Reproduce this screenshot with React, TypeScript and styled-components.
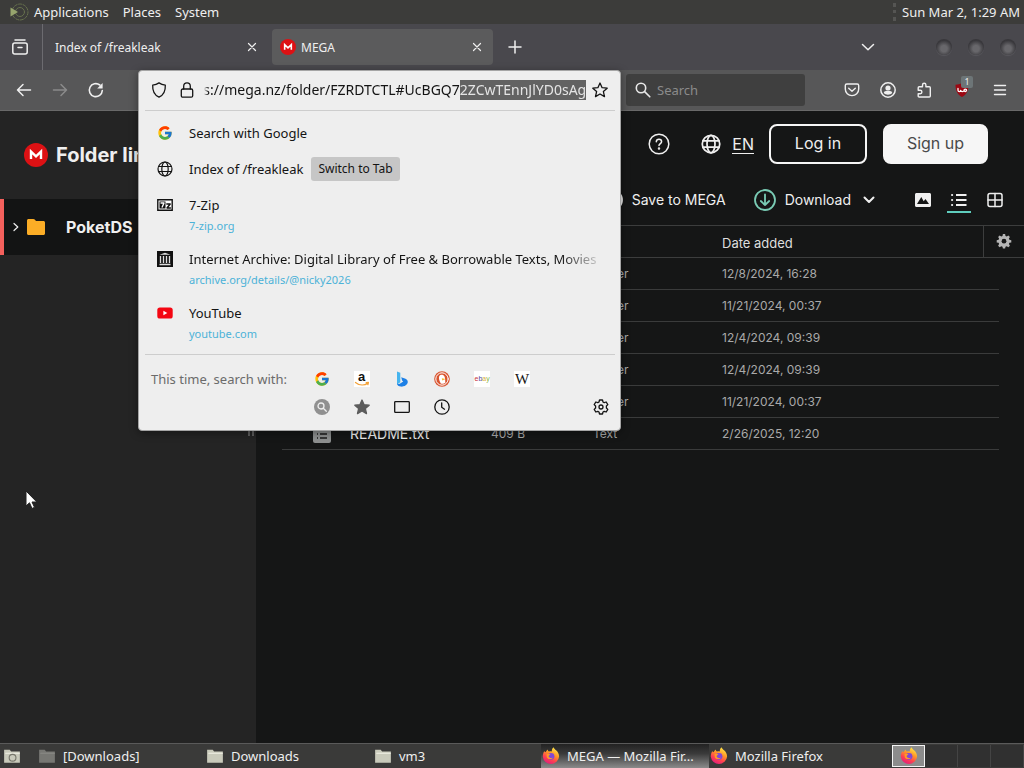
import React, { useEffect, useRef } from "react";
import styled, { createGlobalStyle, css } from "styled-components";
import { FcGoogle } from "react-icons/fc";

const UI_FONT = `"Noto Sans", "Open Sans", sans-serif`;
const WEB_FONT = `Inter, "Liberation Sans", sans-serif`;

const GlobalStyle = createGlobalStyle`
  *, *::before, *::after { box-sizing: border-box; }
  body { margin: 0; background: #151616; font-family: ${UI_FONT}; font-size: 13px; line-height: 20px; color: #efefef; }
  button { font: inherit; color: inherit; border: 0; background: none; padding: 0; cursor: default; }
  a { color: inherit; text-decoration: none; }
  svg { display: block; flex: none; overflow: visible; }
`;

const Desktop = styled.div`
  min-height: 100vh;
  display: flex;
  flex-direction: column;
  overflow: hidden;
`;

/* ---------- desktop panel ---------- */
const TopPanel = styled.header`
  height: 24px;
  display: flex;
  align-items: center;
  padding: 0 4px 0 9px;
  background: #3c3c3a;
`;
const PanelMenu = styled.nav`
  display: flex;
  align-items: center;
  gap: 14px;
`;
const PanelItem = styled.button`
  display: flex;
  align-items: center;
  gap: 5px;
  white-space: nowrap;
`;
const Clock = styled.time`
  margin-left: auto;
  padding-left: 6px;
  border-left: 3px dotted #555553;
  line-height: 18px;
  white-space: nowrap;
`;

/* ---------- browser chrome ---------- */
const TabStrip = styled.div`
  height: 46px;
  display: flex;
  align-items: center;
  background: #49484d;
`;
const TabOverview = styled.button`
  width: 43px;
  align-self: stretch;
  display: flex;
  align-items: center;
  justify-content: center;
  padding-right: 3px;
  border-right: 1px solid #6c6b70;
`;
const Tab = styled.div<{ $active?: boolean }>`
  flex: 0 1 221px;
  height: 36px;
  display: flex;
  align-items: center;
  gap: 5px;
  padding: 0 11px 0 8px;
  border-radius: 4px;
  font-size: 12px;
  background: ${(p) => (p.$active ? "#5b5b5c" : "transparent")};
  & + & { margin-left: 4px; }
  ${(p) => !p.$active && css`flex-basis: 225px; padding: 0 11px 0 12px;`}
`;
const TabTitle = styled.span`
  flex: 1;
  padding-top: 2px;
  white-space: nowrap;
  overflow: hidden;
`;
const NewTab = styled.button`
  margin-left: 15px;
`;
const WindowControls = styled.div`
  display: flex;
  align-items: center;
  gap: 16px;
  margin-left: auto;
  padding-right: 8px;
`;
const TabListButton = styled.button`
  margin-right: 45px;
`;
const WindowButton = styled.button`
  width: 16px;
  height: 16px;
  border-radius: 50%;
  background: radial-gradient(circle at 50% 60%, #68676b 0 25%, #39383c 65%, #353438 100%);
  box-shadow: 0 1px 1px #59585d;
`;
const NavBar = styled.div`
  height: 41px;
  display: flex;
  align-items: center;
  background: #575758;
  border-bottom: 1px solid #696969;
`;
const NavButtons = styled.div`
  display: flex;
  align-items: center;
  gap: 20px;
  width: 138px;
  padding-left: 16px;
`;
const UrlSlot = styled.div`
  flex: 1;
  align-self: stretch;
  position: relative;
  margin-right: 5px;
`;
const SearchBox = styled.label`
  width: 179px;
  height: 32px;
  display: flex;
  align-items: center;
  gap: 6px;
  padding: 0 9px;
  border-radius: 3px;
  background: #3f3f3f;
`;
const SearchInput = styled.input`
  flex: 1;
  min-width: 0;
  padding: 0;
  border: 0;
  outline: 0;
  background: none;
  font: inherit;
  color: #fff;
  &::placeholder { color: #8b8b8b; opacity: 1; }
`;
const Extensions = styled.div`
  width: 219px;
  display: flex;
  align-items: center;
  justify-content: flex-end;
  gap: 20px;
  padding-right: 16px;
`;
const ShieldButton = styled.button`
  position: relative;
  margin: 0 2px;
`;
const Badge = styled.span`
  position: absolute;
  top: -6px;
  left: 7px;
  width: 12px;
  height: 12px;
  border-radius: 2px;
  background: #6d7577;
  font-size: 9px;
  line-height: 12px;
  text-align: center;
`;

/* ---------- address bar drop-down ---------- */
const UrlPanel = styled.section`
  position: absolute;
  z-index: 10;
  top: 0;
  left: 0;
  right: 0;
  padding: 0 5px 9px 6px;
  border: 1px solid #a5a5a5;
  border-radius: 4px;
  background: #eeeeee;
  color: #141414;
  box-shadow: 0 2px 8px rgba(0, 0, 0, 0.4);
`;
const UrlRow = styled.div`
  height: 40px;
  display: flex;
  align-items: center;
  padding: 0 7px 2px 6px;
  border-bottom: 1px solid #cdcdcd;
`;
const UrlInput = styled.input`
  flex: 1;
  min-width: 0;
  height: 20px;
  margin: 0 6px 0 9px;
  padding: 0;
  border: 0;
  outline: 0;
  background: none;
  font: inherit;
  font-size: 14px;
  color: inherit;
  mask-image: linear-gradient(90deg, transparent 0, #000 4px);
  &::selection { background: #626262; color: #e4e4e4; }
`;
const LockSlot = styled.span`
  margin-left: 12px;
`;
const Results = styled.ul`
  list-style: none;
  margin: 0;
  padding: 4px 9px 5px 12px;
  border-bottom: 1px solid #cdcdcd;
`;
const Result = styled.li`
  display: flex;
  align-items: flex-start;
  gap: 16px;
  min-height: 36px;
  padding-top: 8px;
  & > svg { margin-top: 2px; }
`;
const ResultText = styled.div`
  flex: 1;
  min-width: 0;
  min-height: 46px;
`;
const ResultTitle = styled.div<{ $fade?: boolean }>`
  white-space: nowrap;
  ${(p) => p.$fade && css`width: fit-content; mask-image: linear-gradient(270deg, rgba(0, 0, 0, 0.2) 0, #000 36px);`}
`;
const ResultUrl = styled.a`
  display: block;
  padding-top: 1px;
  font-size: 11px;
  line-height: 19px;
  color: #4cb2d8;
`;
const SwitchChip = styled.button`
  height: 24px;
  margin: -2px 0 0 -8px;
  padding: 0 7px;
  border-radius: 3px;
  background: #c6c6c6;
  font-size: 12px;
`;
const SearchWith = styled.div`
  display: flex;
  padding: 10px 6px 0;
  color: #6b6b6b;
`;
const SearchLabel = styled.span`
  width: 151px;
  line-height: 28px;
`;
const Engines = styled.div`
  display: grid;
  grid-template-columns: repeat(6, 40px);
  grid-auto-rows: 28px;
  color: #141414;
`;
const EngineButton = styled.button`
  display: flex;
  align-items: center;
  justify-content: center;
`;
const EngineTile = styled.span`
  width: 16px;
  height: 16px;
  display: flex;
  align-items: center;
  justify-content: center;
  background: #fff;
  font: 15px/16px "Liberation Serif", serif;
`;
const EngineSettings = styled.button`
  align-self: flex-end;
  margin-left: auto;
  height: 28px;
  color: #141414;
`;

/* ---------- web page ---------- */
const Page = styled.div`
  flex: 1;
  display: flex;
  position: relative;
  font-family: ${WEB_FONT};
  background: #151616;
`;
const Sidebar = styled.aside`
  position: relative;
  width: 256px;
  flex: none;
  background: #242424;
`;
const SidebarHeader = styled.div`
  height: 88px;
  display: flex;
  align-items: center;
  gap: 8px;
  padding-left: 24px;
`;
const SidebarTitle = styled.h1`
  margin: 0;
  font-size: 20px;
  line-height: 28px;
  font-weight: 700;
`;
const FolderRow = styled.a`
  height: 56px;
  display: flex;
  align-items: center;
  padding-left: 8px;
  border-left: 4px solid #f4605c;
  background: #131414;
  font-size: 16px;
  font-weight: 700;
`;
const FolderName = styled.span`
  margin-left: 14px;
`;
const ResizeGrip = styled.span`
  position: absolute;
  right: 2px;
  top: 316px;
  width: 6px;
  height: 9px;
  border: solid #5d5d5d;
  border-width: 0 2px;
`;
const MainArea = styled.main`
  flex: 1;
  min-width: 0;
`;
const Account = styled.div`
  display: flex;
  align-items: center;
  justify-content: flex-end;
  padding: 13px 36px 0 0;
  font-size: 16px;
`;
const Language = styled.button`
  display: flex;
  align-items: center;
  gap: 11px;
  margin: 0 15px 0 31px;
`;
const LanguageCode = styled.span`
  border-bottom: 1px solid #efefef;
  line-height: 18px;
`;
const AccountButton = styled.button<{ $solid?: boolean }>`
  width: ${(p) => (p.$solid ? 105 : 98)}px;
  height: 40px;
  padding-bottom: 2px;
  border: 2px solid #f6f6f6;
  border-radius: 8px;
  background: ${(p) => (p.$solid ? "#f6f6f6" : "transparent")};
  color: ${(p) => (p.$solid ? "#4a4a4a" : "#efefef")};
  & + & { margin-left: 16px; }
`;
const Actions = styled.div`
  height: 32px;
  display: flex;
  align-items: center;
  justify-content: flex-end;
  margin: 20px 0 9px;
  padding-right: 17px;
  font-size: 14px;
`;
const Action = styled.button`
  display: flex;
  align-items: center;
  gap: 9px;
  margin-right: 28px;
  white-space: nowrap;
  &:nth-child(2) { margin-right: 33px; }
`;
const ViewButton = styled.button<{ $active?: boolean }>`
  width: 24px;
  height: 26px;
  display: flex;
  align-items: center;
  justify-content: center;
  border: solid transparent;
  border-width: 2px 0;
  border-bottom-color: ${(p) => (p.$active ? "#5fcdbd" : "transparent")};
  & + & { margin-left: 12px; }
`;
const FileTable = styled.table`
  width: 100%;
  border-spacing: 0;
  table-layout: fixed;
  font-size: 12px;
  color: #a9a9a9;
`;
const HeadCell = styled.th<{ $gear?: boolean }>`
  height: 33px;
  padding: 2px 0 0;
  border: solid #3c3d3d;
  border-width: 1px 0;
  font-weight: 400;
  font-size: 13px;
  text-align: left;
  color: #dedede;
  ${(p) => p.$gear && css`border-left-width: 1px; padding: 4px 0 0 12px;`}
`;
const FileRow = styled.tr`
  background: linear-gradient(#3a3b3b, #3a3b3b) no-repeat 26px 31px / calc(100% - 51px) 1px;
`;
const Cell = styled.td`
  height: 32px;
  padding: 0;
`;
const NameCell = styled.div`
  display: flex;
  align-items: center;
  gap: 19px;
  padding-left: 57px;
  font-size: 14px;
  color: #efefef;
`;
const Pointer = styled.svg`
  position: absolute;
  left: 25px;
  top: 379px;
`;

/* ---------- window list ---------- */
const Taskbar = styled.footer`
  height: 25px;
  display: flex;
  align-items: center;
  background: #3a3a39;
  border-top: 1px solid #5a5a5a;
`;
const ShowDesktop = styled.button`
  width: 37px;
  padding-left: 3px;
`;
const WindowItem = styled.button<{ $active?: boolean }>`
  flex: 0 1 168px;
  height: 24px;
  display: flex;
  align-items: center;
  gap: 7px;
  padding-left: 1px;
  white-space: nowrap;
  background: ${(p) => (p.$active ? "linear-gradient(#222, #3a3a3a 40%, #8b8b8b)" : "none")};
`;
const Workspaces = styled.div`
  display: flex;
  margin-left: auto;
`;
const Workspace = styled.button<{ $active?: boolean }>`
  width: 33px;
  height: 22px;
  display: flex;
  align-items: center;
  justify-content: center;
  border-right: 1px solid #444;
  background: #303030;
  ${(p) => p.$active && css`border: 1px solid #f4f4f4; background: #8c8c8c;`}
`;

/* ---------- drawings ---------- */
type IconProps = { size?: number; width?: number; color?: string; box?: number; children: React.ReactNode };
const Icon = ({ size = 16, width = 1.3, color = "currentColor", box = 16, children }: IconProps) => (
  <svg width={size} height={size} viewBox={`0 0 ${box} ${box}`} fill="none" stroke={color} strokeWidth={width} strokeLinecap="round" strokeLinejoin="round" aria-hidden="true">
    {children}
  </svg>
);
const CloseIcon = () => <Icon size={10} box={10} width={1.2}><path d="M1.5 1.5l7 7M8.5 1.5l-7 7" /></Icon>;
const MegaLogo = ({ size }: { size: number }) => (
  <Icon size={size} box={24} width={2.4}>
    <circle cx="12" cy="12" r="12" fill="#dd1114" stroke="none" />
    <path d="M7 16V8.6l5 4.8 5-4.8V16" stroke="#fff" strokeLinecap="butt" strokeLinejoin="miter" />
  </Icon>
);
const GlobeIcon = ({ size = 16, width = 1.2 }) => (
  <Icon size={size} width={width}>
    <circle cx="8" cy="8" r="7" />
    <ellipse cx="8" cy="8" rx="3.2" ry="7" />
    <path d="M1.6 5.5h12.8M1.6 10.5h12.8" />
  </Icon>
);
const FolderGlyph = ({ dim, home }: { dim?: boolean; home?: boolean }) => (
  <Icon size={18} width={1}>
    <path d="M1 2.5h5l1.2 1.5H15v10H1z" fill={dim ? "#777773" : "#c9cabb"} stroke="none" />
    <path d="M2.5 5.5h12" stroke={dim ? "#8b8b87" : "#f1f1e6"} />
    {home && <circle cx="8.5" cy="9.5" r="3" stroke="#77776c" />}
  </Icon>
);
const FirefoxGlyph = () => (
  <Icon size={18} box={18} width={1}>
    <defs>
      <linearGradient id="fox" x1="0.8" y1="0" x2="0.3" y2="1">
        <stop offset="0" stopColor="#fff14f" />
        <stop offset="0.4" stopColor="#ff9a26" />
        <stop offset="0.7" stopColor="#ff4250" />
        <stop offset="1" stopColor="#e21d7c" />
      </linearGradient>
    </defs>
    <path d="M2.2 4.2L3.6 5.3C4.1 4 4.8 3 5.7 2.4c.1 1.1.6 1.7 1.4 2.1 1-.3 2-.2 2.8 0-.2-1.9.4-3.2 1.7-4.2.1 2.3 5.5 3.4 5.5 9.2A8.2 8.2 0 0 1 .8 9.8C.7 7.6 1.4 5.7 2.2 4.2z" fill="url(#fox)" stroke="none" />
    <circle cx="9" cy="9.3" r="3.4" fill="#8148d5" stroke="none" />
    <path d="M4.5 7.3c1.5-.9 2.9-.6 4.1.3-1.2.2-1.8.9-2 1.8.7 1.5 2.6 2 4.3 1-1.1 2.3-5 2.3-6.1-.2z" fill="#ff9a26" stroke="none" />
  </Icon>
);
const GearSolid = () => (
  <Icon size={16}>
    <path d="M6.9 1h2.2l.4 1.9 1.2.5 1.7-1 1.5 1.5-1 1.7.5 1.2 1.9.4v2.2l-1.9.4-.5 1.2 1 1.7-1.5 1.5-1.7-1-1.2.5-.4 1.9H6.9l-.4-1.9-1.2-.5-1.7 1-1.5-1.5 1-1.7-.5-1.2L.7 9.4V7.2l1.9-.4.5-1.2-1-1.7 1.5-1.5 1.7 1 1.2-.5z" fill="#b4b4b4" stroke="none" />
    <circle cx="8" cy="8.2" r="2.4" fill="#151616" stroke="none" />
  </Icon>
);
const SevenZip = () => (
  <Icon width={1.4}>
    <path d="M.8 2.8h14.4v10.4H.8z" fill="#fff" stroke="#111" strokeLinejoin="miter" />
    <path d="M2.5 4.5h6v7h-6z" fill="#111" stroke="none" />
    <path d="M4 6h3L5.2 10" stroke="#fff" />
    <path d="M9.8 7h3.4l-3.2 4h3.4" stroke="#111" />
  </Icon>
);
const ArchiveIcon = () => (
  <Icon>
    <path d="M0 0h16v16H0z" fill="#111" stroke="none" />
    <path d="M2.5 3.8L8 1.8l5.500 2zM2.500 12.800h11v1.400h-11z" fill="#ddd" stroke="none" />
    <path d="M3.5 5v7M6.500 5v7M9.500 5v7M12.500 5v7" stroke="#ddd" strokeLinecap="butt" />
  </Icon>
);
const YouTubeIcon = () => (
  <Icon>
    <rect x="0.3" y="2.5" width="15.4" height="11" rx="2.6" fill="#f40612" stroke="none" />
    <path d="M6.4 5.8v4.4L10.3 8z" fill="#fff" stroke="none" />
  </Icon>
);
const AmazonIcon = () => (
  <Icon>
    <path d="M0 0h16v16H0z" fill="#fff" stroke="none" />
    <text x="4" y="10" fontFamily="Liberation Sans, sans-serif" fontWeight="700" fontSize="13" fill="#111" stroke="none">a</text>
    <path d="M1.5 11.5c4 3.2 9 3.1 12.5.6M12.2 11.6l2.2-.1-.5 2" stroke="#f3a33b" />
  </Icon>
);
const BingIcon = () => (
  <Icon>
    <path d="M3 .5l3.3 1.2v9.6L3 13.5z" fill="#45b4ee" stroke="none" />
    <path d="M7.2 6.3l4.3 1.5c2.3.9 3 3.4 1.6 5.3-1.3 1.8-3.8 2.7-6.1 2.5-2.3-.2-3.9-1.3-4-3.1 1.2.8 2.6.5 3.6-.3l2.600-1.800-1.100-.8z" fill="#1d80e6" stroke="none" />
  </Icon>
);
const DuckIcon = () => (
  <Icon width={1}>
    <circle cx="8" cy="8" r="7.8" fill="#d9542f" stroke="none" />
    <circle cx="8" cy="8" r="6.2" stroke="#fff" />
    <path d="M5.2 5.2c1.2-2 4.3-2 5.3.3.9 2 .6 4.7.9 6.3-1.2 1-3.3 1.3-4.6.6C5.6 10.5 4.4 7.2 5.2 5.2z" fill="#fff" stroke="none" />
    <path d="M7.8 7.3l3.9.6-3.5 1.6z" fill="#f6b72e" stroke="none" />
  </Icon>
);

const URL_START = "https://mega.nz/folder/FZRDTCTL#UcBGQ7";
const URL_SELECTED = "2ZCwTEnnJlYD0sAg";

function AddressInput() {
  const ref = useRef<HTMLInputElement>(null);
  useEffect(() => {
    const el = ref.current;
    if (!el) return;
    el.focus();
    el.setSelectionRange(URL_START.length, URL_START.length + URL_SELECTED.length);
    el.scrollLeft = el.scrollWidth;
  }, []);
  return <UrlInput ref={ref} aria-label="Address" spellCheck={false} defaultValue={URL_START + URL_SELECTED} />;
}

const files = [
  { type: "Folder", date: "12/8/2024, 16:28" },
  { type: "Folder", date: "11/21/2024, 00:37" },
  { type: "Folder", date: "12/4/2024, 09:39" },
  { type: "Folder", date: "12/4/2024, 09:39" },
  { type: "Folder", date: "11/21/2024, 00:37" },
  { name: "README.txt", size: "409 B", type: "Text", date: "2/26/2025, 12:20" },
];

const sites = [
  { icon: <SevenZip />, title: "7-Zip", url: "7-zip.org" },
  { icon: <ArchiveIcon />, title: "Internet Archive: Digital Library of Free & Borrowable Texts, Movies", url: "archive.org/details/@nicky2026", fade: true },
  { icon: <YouTubeIcon />, title: "YouTube", url: "youtube.com" },
];

function AddressPanel() {
  return (
    <UrlPanel>
      <UrlRow>
        <Icon size={16}><path d="M8 .9c2 1.4 4 2 6.3 2.2.3 5.5-1.7 10-6.3 12C3.4 13.1 1.4 8.6 1.7 3.1 4 2.9 6 2.3 8 .9z" /></Icon>
        <LockSlot>
          <Icon size={16}><rect x="2.3" y="7" width="11.4" height="8.2" rx="1.5" /><path d="M4.7 7V4.2a3.3 3.3 0 0 1 6.6 0V7" /></Icon>
        </LockSlot>
        <AddressInput />
        <button aria-label="Bookmark this page">
          <Icon size={16}><path d="M8 1l2.1 4.7 5.1.5-3.8 3.4 1.1 5L8 12l-4.5 2.6 1.1-5L.8 6.2l5.1-.5z" /></Icon>
        </button>
      </UrlRow>
      <Results>
        <Result><FcGoogle size={16} /><ResultTitle>Search with Google</ResultTitle></Result>
        <Result><GlobeIcon /><ResultTitle>Index of /freakleak</ResultTitle><SwitchChip>Switch to Tab</SwitchChip></Result>
        {sites.map((s) => (
          <Result key={s.url}>
            {s.icon}
            <ResultText>
              <ResultTitle $fade={s.fade}>{s.title}</ResultTitle>
              <ResultUrl href="#">{s.url}</ResultUrl>
            </ResultText>
          </Result>
        ))}
      </Results>
      <SearchWith>
        <SearchLabel>This time, search with:</SearchLabel>
        <Engines>
          <EngineButton aria-label="Google"><FcGoogle size={16} /></EngineButton>
          <EngineButton aria-label="Amazon"><AmazonIcon /></EngineButton>
          <EngineButton aria-label="Bing"><BingIcon /></EngineButton>
          <EngineButton aria-label="DuckDuckGo"><DuckIcon /></EngineButton>
          <EngineButton aria-label="eBay">
            <Icon>
              <path d="M0 0h16v16H0z" fill="#fff" stroke="none" />
              <text x="0.5" y="10" fontFamily="Liberation Sans, sans-serif" fontSize="7" stroke="none">
                <tspan fill="#c8323c">e</tspan><tspan fill="#4a4a9a">b</tspan><tspan fill="#dcae3c">a</tspan><tspan fill="#86b843">y</tspan>
              </text>
            </Icon>
          </EngineButton>
          <EngineButton aria-label="Wikipedia"><EngineTile>W</EngineTile></EngineButton>
          <EngineButton aria-label="Search suggestions">
            <Icon><circle cx="8" cy="8" r="8" fill="#909090" stroke="none" /><circle cx="7" cy="7" r="3" stroke="#eee" /><path d="M9.3 9.3l3 3" stroke="#eee" /></Icon>
          </EngineButton>
          <EngineButton aria-label="Bookmarks">
            <Icon><path d="M8 1l2.1 4.7 5.1.5-3.8 3.4 1.1 5L8 12l-4.5 2.6 1.1-5L.8 6.2l5.1-.5z" fill="#5c5c5c" stroke="#5c5c5c" /></Icon>
          </EngineButton>
          <EngineButton aria-label="Tabs"><Icon><rect x="0.7" y="2.6" width="14.6" height="10.8" rx="0.8" /></Icon></EngineButton>
          <EngineButton aria-label="History"><Icon><circle cx="8" cy="8" r="7.2" /><path d="M7.7 3.8v4.4l2.8 2" /></Icon></EngineButton>
        </Engines>
        <EngineSettings aria-label="Search settings">
          <Icon><path d="M6.5 1h3l.5 2 1.2.7 2-.7 1.6 2.6L13.4 7v2l1.4 1.4-1.6 2.6-2-.7-1.2.7-.5 2h-3L6 13l-1.2-.7-2 .7-1.6-2.6L2.6 9V7L1.2 5.6 2.8 3l2 .7L6 3z" /><circle cx="8" cy="8" r="2" /></Icon>
        </EngineSettings>
      </SearchWith>
    </UrlPanel>
  );
}

export default function App() {
  return (
    <Desktop>
      <GlobalStyle />
      <TopPanel>
        <PanelMenu>
          <PanelItem>
            <Icon size={20} box={20} width={1}>
              <circle cx="11" cy="10" r="8" stroke="#66704d" strokeDasharray="3 1.5" /><circle cx="11" cy="10" r="4.5" stroke="#66704d" /><path d="M1.5 5.5v9L9 10z" fill="#97a56d" stroke="none" />
            </Icon>
            Applications
          </PanelItem>
          <PanelItem>Places</PanelItem>
          <PanelItem>System</PanelItem>
        </PanelMenu>
        <Clock>Sun Mar 2, 1:29 AM</Clock>
      </TopPanel>

      <TabStrip>
        <TabOverview aria-label="View recent browsing">
          <Icon width={1.5}><path d="M3 1h10" /><rect x="0.8" y="4" width="14.4" height="11" rx="2" /><path d="M6 8.5h4" /></Icon>
        </TabOverview>
        <Tab>
          <TabTitle>Index of /freakleak</TabTitle>
          <button aria-label="Close tab"><CloseIcon /></button>
        </Tab>
        <Tab $active>
          <MegaLogo size={16} />
          <TabTitle>MEGA</TabTitle>
          <button aria-label="Close tab"><CloseIcon /></button>
        </Tab>
        <NewTab aria-label="New tab"><Icon size={14} box={14} width={1.5}><path d="M7 1v12M1 7h12" /></Icon></NewTab>
        <WindowControls>
          <TabListButton aria-label="List all tabs"><Icon size={14} box={14} width={1.5}><path d="M1.5 4.5L7 9.8l5.5-5.3" /></Icon></TabListButton>
          <WindowButton aria-label="Minimize" />
          <WindowButton aria-label="Maximize" />
          <WindowButton aria-label="Close" />
        </WindowControls>
      </TabStrip>

      <NavBar>
        <NavButtons>
          <button aria-label="Back"><Icon width={1.5}><path d="M14.5 8H1.5M7 2.5L1.5 8 7 13.5" /></Icon></button>
          <button aria-label="Forward"><Icon width={1.5} color="#8b8b8b"><path d="M1.5 8h13M9 2.5L14.5 8 9 13.5" /></Icon></button>
          <button aria-label="Reload"><Icon width={1.6}><path d="M14.3 8.5A6.5 6.5 0 1 1 11.8 3" /><path d="M14.6 1v5.5H9.2z" fill="currentColor" stroke="none" /></Icon></button>
        </NavButtons>
        <UrlSlot><AddressPanel /></UrlSlot>
        <SearchBox>
          <Icon width={1.6} color="#e8e8e8"><circle cx="6" cy="6" r="4.7" /><path d="M9.6 9.6l5.2 5.2" /></Icon>
          <SearchInput placeholder="Search" aria-label="Search" />
        </SearchBox>
        <Extensions>
          <button aria-label="Pocket"><Icon width={1.4}><path d="M2.8 2h10.4c1 0 1.5.6 1.5 1.5V7c0 3.8-3 6.6-6.7 6.6S1.3 10.8 1.3 7V3.5C1.3 2.6 1.8 2 2.8 2z" /><path d="M4.7 6.2L8 9.3l3.3-3.1" /></Icon></button>
          <button aria-label="Account"><Icon width={1.5}><circle cx="8" cy="8" r="7.2" /><circle cx="8" cy="6" r="2.6" fill="currentColor" stroke="none" /><path d="M3.8 11c0-1.3 1-2 2.2-2h4c1.2 0 2.2.7 2.2 2-2 2.3-6.400 2.300-8.400 0z" fill="currentColor" stroke="none" /></Icon></button>
          <button aria-label="Extensions"><Icon width={1.4}><path d="M6.5 4.8V3a1.7 1.7 0 0 1 3.4 0v1.8h3.4c.6 0 1 .4 1 1V14c0 .6-.4 1-1 1H3.2c-.6 0-1-.4-1-1v-2.300h2a1.700 1.700 0 0 0 0-3.400h-2V5.800c0-.6.4-1 1-1z" /></Icon></button>
          <ShieldButton aria-label="Content blocker">
            <Icon size={16}><path d="M8 1c2 1.3 4 1.6 6.5 1.7 0 5.5-1.4 9.3-6.5 12.3-5.1-3-6.5-6.8-6.5-12.3C4 2.6 6 2.3 8 1z" fill="#9b0712" stroke="none" /><path d="M4 6.5v1.8c0 1.7 2.7 1.7 2.7 0 0 1.700 3 1.700 3.400 0M10.100 8.300a1.200 1.200 0 1 0 2.400 0 1.200 1.200 0 1 0-2.400 0" stroke="#fff" /></Icon>
            <Badge>1</Badge>
          </ShieldButton>
          <button aria-label="Menu"><Icon width={1.4}><path d="M2.5 3.5h11M2.5 8h11M2.5 12.5h11" /></Icon></button>
        </Extensions>
      </NavBar>

      <Page>
        <Sidebar>
          <SidebarHeader><MegaLogo size={24} /><SidebarTitle>Folder link</SidebarTitle></SidebarHeader>
          <FolderRow href="#">
            <Icon size={8} box={8} width={1.2}><path d="M2 .5L5.8 4 2 7.5" /></Icon>
            <Icon size={32} box={32}><path d="M7 9.5C7 8.7 7.7 8 8.5 8h4.8c.6 0 1 .2 1.4.6L16 10h7.5c.8 0 1.5.7 1.5 1.5v11c0 .8-.7 1.5-1.5 1.5h-15c-.8 0-1.5-.7-1.5-1.5z" fill="#fbad26" stroke="none" /></Icon>
            <FolderName>PoketDS</FolderName>
          </FolderRow>
          <ResizeGrip />
        </Sidebar>
        <MainArea>
          <Account>
            <button aria-label="Help"><Icon size={22} box={22} width={1.5}><circle cx="11" cy="11" r="9.8" /><path d="M8.3 8.7c.2-3.2 5.3-3.1 5.3 0 0 1.8-2.6 2-2.6 3.9" /><circle cx="11" cy="15.5" r="0.5" fill="currentColor" /></Icon></button>
            <Language><GlobeIcon size={20} width={1.4} /><LanguageCode>EN</LanguageCode></Language>
            <AccountButton>Log in</AccountButton>
            <AccountButton $solid>Sign up</AccountButton>
          </Account>
          <Actions>
            <Action><Icon size={22} box={22} width={1.8}><circle cx="11" cy="11" r="10" /><path d="M11 6v10M6 11h10" /></Icon>Save to MEGA</Action>
            <Action>
              <Icon size={22} box={22} width={1.8} color="#79cbb4"><circle cx="11" cy="11" r="10" /><path d="M11 5.5v10.5M6.8 12l4.2 4 4.2-4" /></Icon>
              Download
              <Icon size={18} box={18} width={2}><path d="M4.5 6.5L9 11l4.5-4.5" /></Icon>
            </Action>
            <ViewButton aria-label="Media view"><Icon><path d="M1.5 1h13c.8 0 1.5.7 1.5 1.5v11c0 .8-.7 1.5-1.5 1.5h-13C.7 15 0 14.3 0 13.5v-11C0 1.7.7 1 1.5 1zM2 12h12l-3.5-5L8.7 9.3 6.3 5z" fill="currentColor" fillRule="evenodd" stroke="none" /></Icon></ViewButton>
            <ViewButton $active aria-label="List view"><Icon width={2}><path d="M5 3h10.5M5 8h10.5M5 13h10.5" strokeLinecap="butt" /><path d="M1 3h.2M1 8h.2M1 13h.2" /></Icon></ViewButton>
            <ViewButton aria-label="Grid view"><Icon width={1.5}><rect x="1" y="1.5" width="14" height="13" rx="2" /><path d="M8 1.5v13M1 8h14" /></Icon></ViewButton>
          </Actions>
          <FileTable>
            <colgroup><col width="235" /><col width="102" /><col width="129" /><col /><col width="41" /></colgroup>
            <thead>
              <tr><HeadCell /><HeadCell /><HeadCell /><HeadCell>Date added</HeadCell><HeadCell $gear><button aria-label="Column settings"><GearSolid /></button></HeadCell></tr>
            </thead>
            <tbody>
              {files.map((f, i) => (
                <FileRow key={i}>
                  <Cell>
                    {f.name && (
                      <NameCell>
                        <Icon size={18} box={18} width={1.5}><rect width="18" height="18" rx="2" fill="#8d8f8f" stroke="none" /><path d="M4 5h1M7 5h7M4 9h1M7 9h7M4 13h1M7 13h7" stroke="#1c1c1c" strokeLinecap="butt" /></Icon>
                        {f.name}
                      </NameCell>
                    )}
                  </Cell>
                  <Cell>{f.size}</Cell>
                  <Cell>{f.type}</Cell>
                  <Cell colSpan={2}>{f.date}</Cell>
                </FileRow>
              ))}
            </tbody>
          </FileTable>
        </MainArea>
        <Pointer width="14" height="20" viewBox="0 0 14 20" aria-hidden="true"><path d="M1 1v15l3.5-3.2L7 18.5l2.5-1.2L7 12h4.8z" fill="#fff" stroke="#222" /></Pointer>
      </Page>

      <Taskbar>
        <ShowDesktop aria-label="Show desktop"><FolderGlyph home /></ShowDesktop>
        <WindowItem><FolderGlyph dim />[Downloads]</WindowItem>
        <WindowItem><FolderGlyph />Downloads</WindowItem>
        <WindowItem><FolderGlyph />vm3</WindowItem>
        <WindowItem $active><FirefoxGlyph />MEGA — Mozilla Fir...</WindowItem>
        <WindowItem><FirefoxGlyph />Mozilla Firefox</WindowItem>
        <Workspaces>
          <Workspace $active aria-label="Workspace 1"><FirefoxGlyph /></Workspace>
          <Workspace aria-label="Workspace 2" />
          <Workspace aria-label="Workspace 3" />
          <Workspace aria-label="Workspace 4" />
        </Workspaces>
      </Taskbar>
    </Desktop>
  );
}
